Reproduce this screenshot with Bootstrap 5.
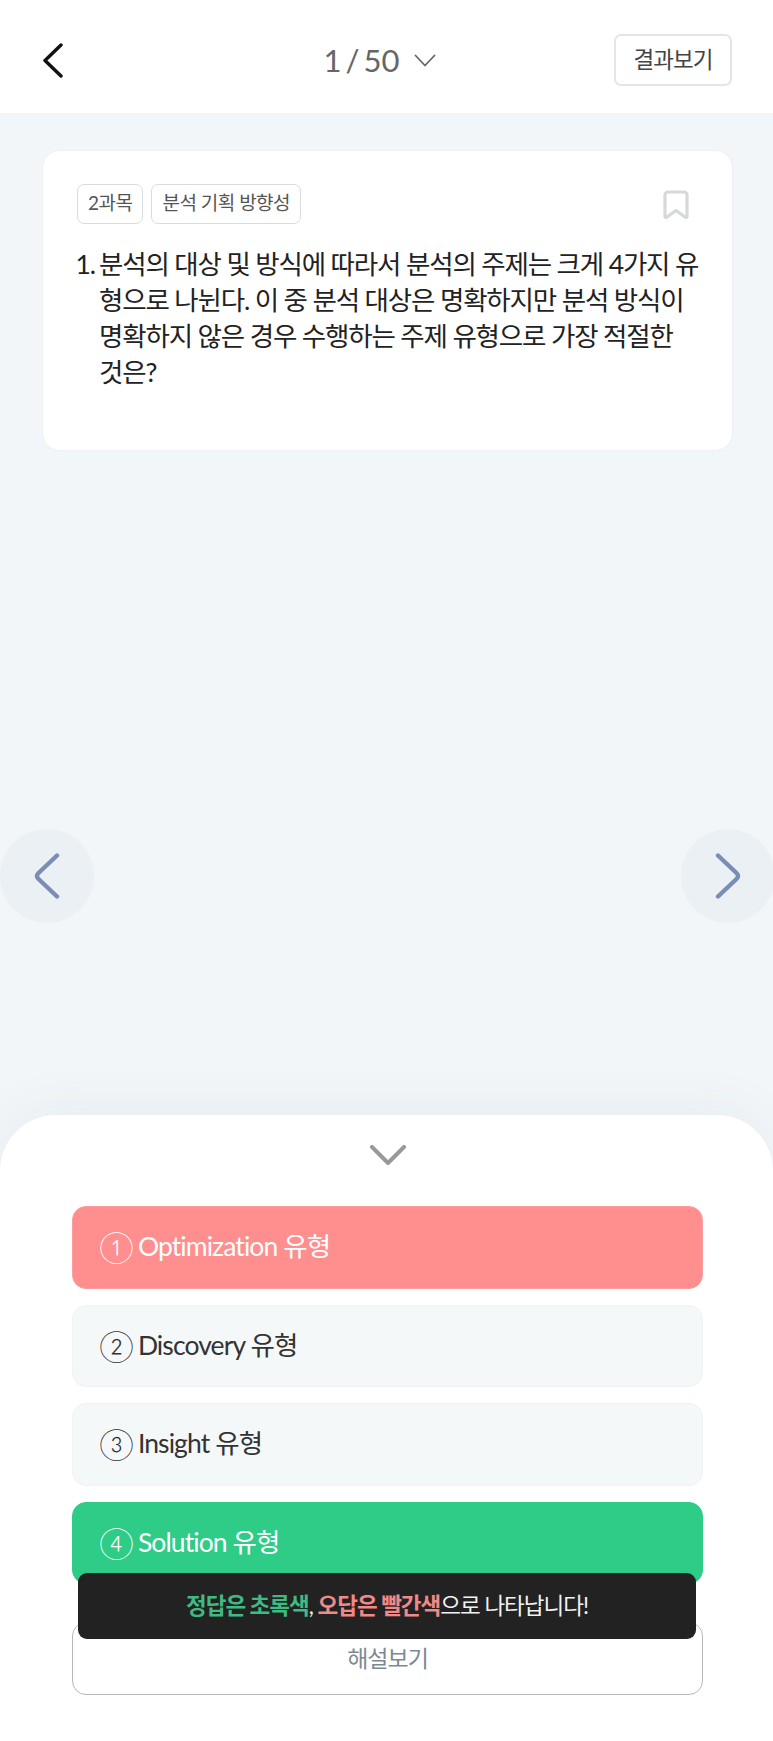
<!DOCTYPE html>
<html lang="ko">
<head>
<meta charset="utf-8">
<meta name="viewport" content="width=device-width, initial-scale=1">
<link href="https://cdn.jsdelivr.net/npm/bootstrap@5.3.0/dist/css/bootstrap.min.css" rel="stylesheet">
<style>
html,body{height:100%}
body{font-family:"Lato","Noto Sans CJK KR",sans-serif;background:#f2f6f9;color:#222}
.app-shell{height:1741px;width:773px;overflow:hidden}
.top-bar{height:112.5px;background:#fff;padding:8px 41px 0 42px}
.back-slot{width:104px}
.back-ico{width:21px;height:35px;display:block}
.page-count{font-size:31px;font-weight:400;color:#666;line-height:1;word-spacing:-4px}
.count-caret{width:22px;height:13px;margin-left:15px}
.result-btn{width:118px;height:52px;border:2px solid #e3e6e8;border-radius:7px;font-size:22.5px;letter-spacing:-1px;color:#444;padding:0;background:#fff;font-weight:400}
.body-zone{padding:37px 40px 0 42px}
.q-card{height:301px;border:1.5px solid #edf1f5;border-radius:18px;padding:33px 34px;background:#fff}
.tag-chip{height:40px;border:1.5px solid #d9dcdf;border-radius:7px;padding:0 10px;font-size:19px;letter-spacing:-.5px;color:#555;background:#fff;font-weight:400}
.mark-ico{width:28px;height:30px;margin:6px 8px 0 0}
.q-text{margin:22px 0 0;padding-left:22px;text-indent:-22px;font-size:26.5px;line-height:36.3px;letter-spacing:-1.15px;color:#222;font-weight:400;white-space:nowrap}
.q-no{display:inline-block;width:23.5px;margin-left:-1.5px;text-indent:0}
.nav-round{width:94px;height:94px;border-radius:50%;background:#ebf0f5;top:829px}
.nav-left{left:0}
.nav-right{left:681px}
.nav-round svg{width:26px;height:46px}
.sheet{height:626px;background:#fff;border-radius:56px 56px 0 0;box-shadow:0 -10px 50px rgba(60,70,90,.05);padding:30px 70px 0 72px}
.sheet-caret{width:36px;height:20px;margin:0 auto 41px;display:block}
.opt-stack{gap:16px}
.opt-btn{height:82.5px;border-radius:14px;padding:0 26px;font-size:26.5px;letter-spacing:-.9px;text-align:left;border:1.5px solid transparent;font-weight:400}
.opt-red{background:#ff8e8e;border-color:#ff9c9c;color:#fff}
.opt-plain{background:#f5f8f9;border-color:#eff3f5;color:#333}
.opt-green{background:#2ecc87;border-color:#2ecc87;color:#fff}
.opt-num{font-size:32px;margin-right:4px;line-height:1;font-weight:300;letter-spacing:0}
.solve-btn{height:73px;margin-top:38px;border:1.5px solid #b8b8b8;border-radius:14px;background:#fff;color:#7c8894;font-size:23px;letter-spacing:-1px;padding:0;font-weight:400;line-height:1}
.hint-toast{left:78px;top:1573px;width:618px;height:66px;background:#222;border-radius:9px;color:#f2f2f2;font-size:22.5px;letter-spacing:-1px}
.hint-ok{color:#3fbb82;font-weight:700}
.hint-bad{color:#f08a88;font-weight:700}
</style>
</head>
<body>
<div class="app-shell position-relative d-flex flex-column">
  <header class="top-bar d-flex align-items-center justify-content-between flex-shrink-0">
    <div class="back-slot">
      <svg class="back-ico" viewBox="0 0 21 35" fill="none" stroke="#111" stroke-width="3.400" stroke-linecap="round" stroke-linejoin="round"><path d="M19 2 3 17.500 19 33"/></svg>
    </div>
    <div class="d-flex align-items-center">
      <span class="page-count">1 / 50</span>
      <svg class="count-caret" viewBox="0 0 22 13" fill="none" stroke="#666" stroke-width="1.800" stroke-linecap="round" stroke-linejoin="round"><path d="M1.500 1.500 11 11.500 20.500 1.500"/></svg>
    </div>
    <button type="button" class="btn result-btn">결과보기</button>
  </header>
  <main class="body-zone flex-grow-1">
    <section class="card q-card">
      <div class="d-flex justify-content-between align-items-start">
        <div class="d-flex gap-2">
          <span class="tag-chip d-inline-flex align-items-center">2과목</span>
          <span class="tag-chip d-inline-flex align-items-center">분석 기획 방향성</span>
        </div>
        <svg class="mark-ico" viewBox="0 0 28 30" fill="none" stroke="#d5d9dc" stroke-width="3.200" stroke-linejoin="round"><path d="M3 5a3 3 0 0 1 3-3h16a3 3 0 0 1 3 3v21.500a1 1 0 0 1-1.600.800L14 20.500l-9.400 6.800a1 1 0 0 1-1.600-.800z"/></svg>
      </div>
      <p class="q-text"><span class="q-no">1.</span>분석의 대상 및 방식에 따라서 분석의 주제는 크게 4가지 유<br>형으로 나뉜다. 이 중 분석 대상은 명확하지만 분석 방식이<br>명확하지 않은 경우 수행하는 주제 유형으로 가장 적절한<br>것은?</p>
    </section>
  </main>
  <section class="sheet flex-shrink-0">
    <svg class="sheet-caret" viewBox="0 0 36 20" fill="none" stroke="#999" stroke-width="4" stroke-linecap="round" stroke-linejoin="round"><path d="M2 2 18 18 34 2"/></svg>
    <div class="d-flex flex-column opt-stack">
      <button type="button" class="btn opt-btn opt-red d-flex align-items-center"><span class="opt-num">①</span>Optimization 유형</button>
      <button type="button" class="btn opt-btn opt-plain d-flex align-items-center"><span class="opt-num">②</span>Discovery 유형</button>
      <button type="button" class="btn opt-btn opt-plain d-flex align-items-center"><span class="opt-num">③</span>Insight 유형</button>
      <button type="button" class="btn opt-btn opt-green d-flex align-items-center"><span class="opt-num">④</span>Solution 유형</button>
    </div>
    <button type="button" class="btn solve-btn w-100">해설보기</button>
  </section>
  <div class="nav-round nav-left position-absolute d-flex align-items-center justify-content-center">
    <svg viewBox="0 0 26 46" fill="none" stroke="#7a8db5" stroke-width="4.400" stroke-linecap="round" stroke-linejoin="round"><path d="M23 2.500 4 20.500Q2 23 4 25.500L23 43.500"/></svg>
  </div>
  <div class="nav-round nav-right position-absolute d-flex align-items-center justify-content-center">
    <svg viewBox="0 0 26 46" fill="none" stroke="#7a8db5" stroke-width="4.400" stroke-linecap="round" stroke-linejoin="round"><path d="M3 2.500 22 20.500Q24 23 22 25.500L3 43.500"/></svg>
  </div>
  <div class="hint-toast position-absolute d-flex align-items-center justify-content-center">
    <span><span class="hint-ok">정답은 초록색</span>, <span class="hint-bad">오답은 빨간색</span>으로 나타납니다!</span>
  </div>
</div>
<script src="https://cdn.jsdelivr.net/npm/bootstrap@5.3.0/dist/js/bootstrap.bundle.min.js"></script>
</body>
</html>
